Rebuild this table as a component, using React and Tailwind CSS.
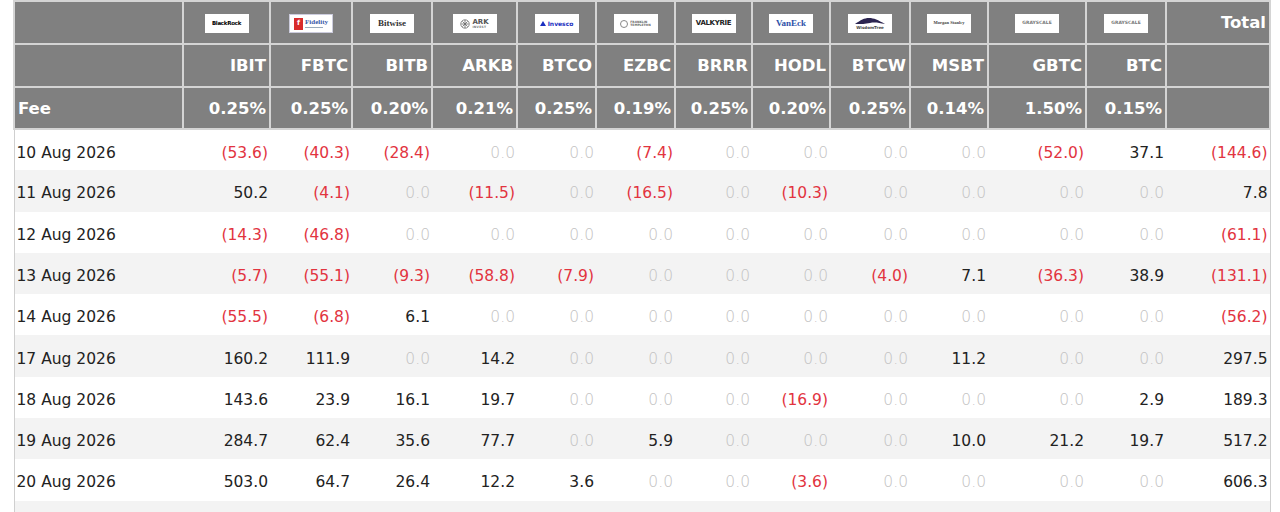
import React from "react";

const funds = [
  { t: "IBIT", fee: "0.25%", w: 87 },
  { t: "FBTC", fee: "0.25%", w: 82 },
  { t: "BITB", fee: "0.20%", w: 80 },
  { t: "ARKB", fee: "0.21%", w: 85 },
  { t: "BTCO", fee: "0.25%", w: 79 },
  { t: "EZBC", fee: "0.19%", w: 79 },
  { t: "BRRR", fee: "0.25%", w: 77 },
  { t: "HODL", fee: "0.20%", w: 78 },
  { t: "BTCW", fee: "0.25%", w: 80 },
  { t: "MSBT", fee: "0.14%", w: 78 },
  { t: "GBTC", fee: "1.50%", w: 98 },
  { t: "BTC", fee: "0.15%", w: 80 },
];

const rows = [
  ["10 Aug 2026", "(53.6)", "(40.3)", "(28.4)", "0.0", "0.0", "(7.4)", "0.0", "0.0", "0.0", "0.0", "(52.0)", "37.1", "(144.6)"],
  ["11 Aug 2026", "50.2", "(4.1)", "0.0", "(11.5)", "0.0", "(16.5)", "0.0", "(10.3)", "0.0", "0.0", "0.0", "0.0", "7.8"],
  ["12 Aug 2026", "(14.3)", "(46.8)", "0.0", "0.0", "0.0", "0.0", "0.0", "0.0", "0.0", "0.0", "0.0", "0.0", "(61.1)"],
  ["13 Aug 2026", "(5.7)", "(55.1)", "(9.3)", "(58.8)", "(7.9)", "0.0", "0.0", "0.0", "(4.0)", "7.1", "(36.3)", "38.9", "(131.1)"],
  ["14 Aug 2026", "(55.5)", "(6.8)", "6.1", "0.0", "0.0", "0.0", "0.0", "0.0", "0.0", "0.0", "0.0", "0.0", "(56.2)"],
  ["17 Aug 2026", "160.2", "111.9", "0.0", "14.2", "0.0", "0.0", "0.0", "0.0", "0.0", "11.2", "0.0", "0.0", "297.5"],
  ["18 Aug 2026", "143.6", "23.9", "16.1", "19.7", "0.0", "0.0", "0.0", "(16.9)", "0.0", "0.0", "0.0", "2.9", "189.3"],
  ["19 Aug 2026", "284.7", "62.4", "35.6", "77.7", "0.0", "5.9", "0.0", "0.0", "0.0", "10.0", "21.2", "19.7", "517.2"],
  ["20 Aug 2026", "503.0", "64.7", "26.4", "12.2", "3.6", "0.0", "0.0", "(3.6)", "0.0", "0.0", "0.0", "0.0", "606.3"],
  ["", "", "", "", "", "", "", "", "", "", "", "", "", ""],
];

const Box = ({ children, className = "" }) => (
  <div className={"mx-auto flex h-[19px] w-[44px] items-center justify-center overflow-hidden bg-white leading-none " + className}>
    {children}
  </div>
);

const logos = [
  <Box key="br"><span className="text-[5.5px] font-bold tracking-tighter text-black">BlackRock</span></Box>,
  <Box key="fi" className="gap-[2px] border border-[#ccd]">
    <span className="flex h-[12px] w-[9px] items-center justify-center bg-[#d82b2b] text-[7px] font-bold text-white">f</span>
    <span className="flex flex-col items-start">
      <span className="text-[7px] text-[#3a5aa8]" style={{ fontFamily: '"Liberation Serif", serif' }}>Fidelity</span>
      <span className="mt-[1px] h-[1px] w-[18px] bg-[#9ab]" />
    </span>
  </Box>,
  <Box key="bw"><span className="text-[9px] text-[#333]" style={{ fontFamily: '"Liberation Serif", serif' }}>Bitwise</span></Box>,
  <Box key="ark" className="gap-[2px]">
    <svg width="10" height="10" viewBox="0 0 10 10" fill="none" stroke="#666" strokeWidth="0.8">
      <circle cx="5" cy="5" r="4.2" />
      <path d="M1.5 5h7M5 1v8M2.5 2.5l5 5M7.5 2.5l-5 5" />
    </svg>
    <span className="flex flex-col items-start">
      <span className="text-[7px] font-bold text-[#555]">ARK</span>
      <span className="text-[3px] tracking-widest text-[#777]">INVEST</span>
    </span>
  </Box>,
  <Box key="iv" className="gap-[2px]">
    <svg width="6" height="5" viewBox="0 0 6 5"><path d="M0 5L3 0l3 5z" fill="#1a2fc0" /></svg>
    <span className="text-[6px] text-[#1a2fc0]">Invesco</span>
  </Box>,
  <Box key="ft" className="gap-[2px]">
    <span className="h-[8px] w-[8px] rounded-full border border-[#888]" />
    <span className="flex flex-col items-start">
      <span className="text-[3px] text-[#666]">FRANKLIN</span>
      <span className="text-[3px] text-[#666]">TEMPLETON</span>
    </span>
  </Box>,
  <Box key="va"><span className="text-[7px] font-bold tracking-tighter text-[#222]">VALKYRIE</span></Box>,
  <Box key="ve"><span className="text-[9px] font-bold text-[#2d4fa8]" style={{ fontFamily: '"Liberation Serif", serif' }}>VanEck</span></Box>,
  <Box key="wt" className="flex-col">
    <svg width="30" height="9" viewBox="0 0 30 9"><path d="M0 7C6 3 9 1 14 1s9 2 16 6c-6-1-10-2-15-1s-8 1-15 1z" fill="#2b2450" /></svg>
    <span className="text-[4px] text-[#444]">WisdomTree</span>
  </Box>,
  <Box key="ms"><span className="text-[4.5px] text-[#444]" style={{ fontFamily: '"Liberation Serif", serif' }}>Morgan Stanley</span></Box>,
  <Box key="g1"><span className="text-[4.5px] text-[#777]">GRAYSCALE</span></Box>,
  <Box key="g2"><span className="text-[4.5px] text-[#777]">GRAYSCALE</span></Box>,
];

const th = "border-2 border-[#d4d4d4] bg-[#808080] px-[3px] text-right font-bold text-white";

const valueClass = (v) => {
  if (v === "0.0") return "text-[#c2c2c2] font-extralight";
  if (v.startsWith("(")) return "text-[#e2343f]";
  return "text-[#222]";
};

export default function App() {
  return (
    <div className="min-h-screen bg-white" style={{ fontFamily: '"DejaVu Sans", Verdana, sans-serif' }}>
      <table className="ml-[13px] table-fixed border-collapse" style={{ width: 1257 }}>
        <colgroup>
          <col style={{ width: 169 }} />
          {funds.map((f) => (
            <col key={f.t} style={{ width: f.w }} />
          ))}
          <col style={{ width: 104 }} />
        </colgroup>
        <thead className="text-[16.5px]">
          <tr className="h-[43px]">
            <th className={th + " pt-[2px]"} />
            {logos.map((l, i) => (
              <th key={i} className={th + " pt-[2px]"}>{l}</th>
            ))}
            <th className={th + " pt-[2px]"}>Total</th>
          </tr>
          <tr className="h-[43px]">
            <th className={th + " pt-[2px]"} />
            {funds.map((f) => (
              <th key={f.t} className={th + " pt-[2px]"}>{f.t}</th>
            ))}
            <th className={th} />
          </tr>
          <tr className="h-[42px]">
            <th className={th + " !text-left pt-[2px]"}>Fee</th>
            {funds.map((f) => (
              <th key={f.t} className={th + " pt-[2px]"}>{f.fee}</th>
            ))}
            <th className={th} />
          </tr>
        </thead>
        <tbody className="text-[15.5px]">
          {rows.map((r, i) => (
            <tr key={i} className={"h-[41.3px] " + (i % 2 ? "bg-[#f3f3f3]" : "bg-white")}>
              {r.map((v, j) => (
                <td
                  key={j}
                  className={
                    j === 0
                      ? "border-l border-[#cfcfcf] pl-[2px] pt-[6px] text-left text-[#222]"
                      : "pr-[2px] pt-[6px] text-right " + valueClass(v) + (j === r.length - 1 ? " border-r border-[#cfcfcf]" : "")
                  }
                >
                  {v}
                </td>
              ))}
            </tr>
          ))}
        </tbody>
      </table>
    </div>
  );
}
